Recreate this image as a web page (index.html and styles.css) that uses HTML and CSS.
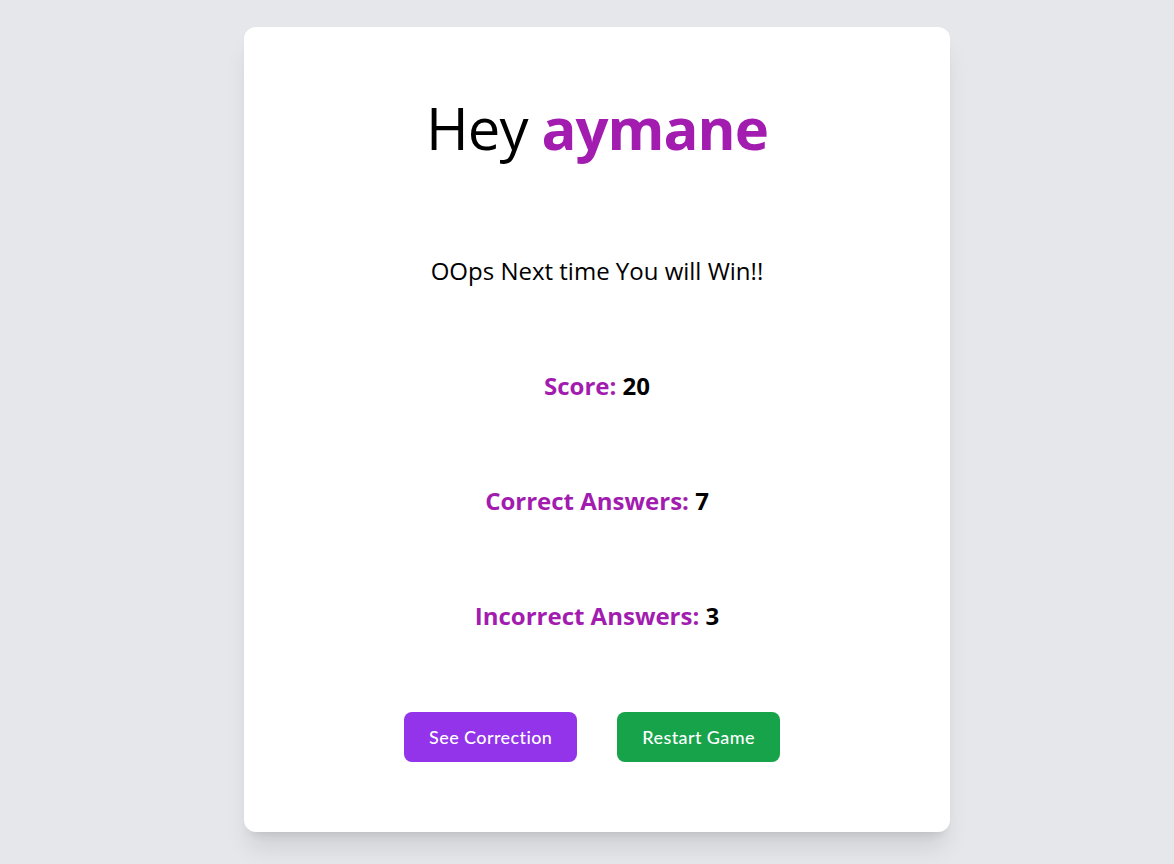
FILE: index.html
```html
<!DOCTYPE html>
<html lang="en">
<head>
<meta charset="utf-8">
<title>Quiz Result</title>
<link rel="stylesheet" href="styles.css">
</head>
<body>
<main class="page">
  <section class="card">
    <h1 class="title">Hey <span class="accent">aymane</span></h1>
    <p class="message">OOps Next time You will Win!!</p>
    <p class="stat"><span class="accent">Score:</span> 20</p>
    <p class="stat"><span class="accent">Correct Answers:</span> 7</p>
    <p class="stat"><span class="accent">Incorrect Answers:</span> 3</p>
    <div class="actions">
      <button class="btn btn-purple">See Correction</button>
      <button class="btn btn-green">Restart Game</button>
    </div>
  </section>
</main>
</body>
</html>
```

FILE: styles.css
```css
* { box-sizing: border-box; }
html, body { margin: 0; padding: 0; }
body {
  background: #e5e7eb;
  font-family: "Open Sans", "Noto Sans", "Liberation Sans", sans-serif;
  color: #000;
  min-height: 864px;
}
.page {
  display: flex;
  justify-content: center;
  padding-top: 27px;
  padding-left: 20px;
}
.card {
  width: 706px;
  height: 805px;
  background: #fff;
  border-radius: 12px;
  box-shadow: 0 20px 25px -5px rgba(0,0,0,0.1), 0 8px 10px -6px rgba(0,0,0,0.1);
  display: flex;
  flex-direction: column;
  align-items: center;
  padding-top: 71px;
}
.title {
  margin: 0;
  font-size: 58px;
  line-height: 60px;
  height: 60px;
  font-weight: 400;
  letter-spacing: -1px;
}
.accent { color: #a21caf; font-weight: 700; }
.message {
  margin: 97px 0 0;
  font-size: 24px;
  line-height: 32px;
}
.stat {
  margin: 83px 0 0;
  font-size: 24px;
  line-height: 32px;
  font-weight: 700;
}
.actions {
  margin-top: 80px;
  display: flex;
  gap: 40px;
  padding-right: 10px;
}
.btn {
  border: none;
  border-radius: 8px;
  height: 50px;
  padding: 0 25px;
  color: #fff;
  font-family: "Lato", "Open Sans", sans-serif;
  font-size: 18px;
  font-weight: 500;
  letter-spacing: 0.4px;
  cursor: pointer;
}
.btn-purple { background: #9333ea; }
.btn-green { background: #16a34a; }
```
